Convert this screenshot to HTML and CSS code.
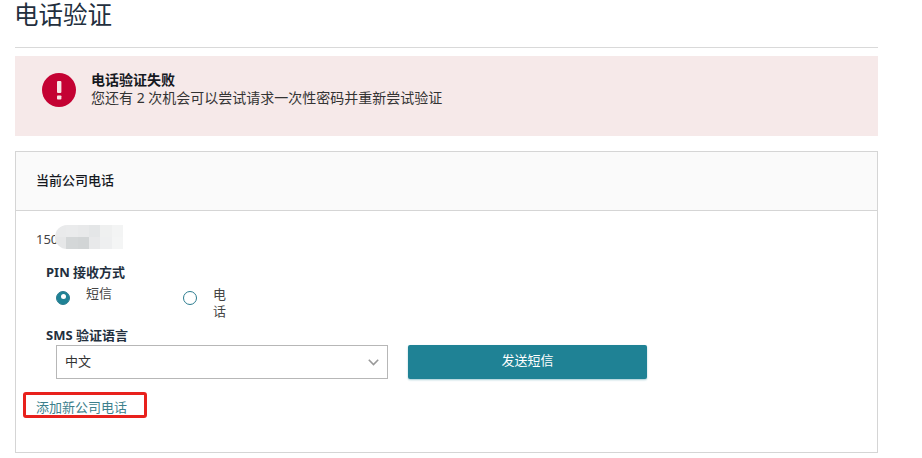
FILE: index.html
```html
<!DOCTYPE html>
<html lang="zh-CN">
<head>
    <meta charset="UTF-8">
    <title>电话验证</title>
    <link rel="stylesheet" href="styles.css">
</head>
<body>
    <div class="page">
        <h1 class="page-title">电话验证</h1>
        <div class="alert">
            <svg class="alert-icon" width="34" height="34" viewBox="0 0 34 34">
                <circle cx="17" cy="17" r="17" fill="#c40233"/>
                <rect x="15" y="8" width="4.4" height="12" rx="1" fill="#f7e6e6"/>
                <rect x="15" y="22.5" width="4.4" height="4" rx="0.8" fill="#f7e6e6"/>
            </svg>
            <div class="alert-text">
                <div class="alert-title">电话验证失败</div>
                <div>您还有 2 次机会可以尝试请求一次性密码并重新尝试验证</div>
            </div>
        </div>
        <div class="card">
            <div class="card-header">当前公司电话</div>
            <div class="card-body">
                <div class="phone">150
                    <span class="phone-blur">
                        <i></i><i></i><i></i><i></i><i></i><i></i>
                        <i></i><i></i><i></i><i></i><i></i><i></i>
                    </span>
                </div>
                <div class="field">
                    <div class="field-label">PIN 接收方式</div>
                    <div class="radio-row">
                        <label class="radio-item">
                            <span class="radio radio-on"></span>
                            <span class="radio-text">短信</span>
                        </label>
                        <label class="radio-item">
                            <span class="radio"></span>
                            <span class="radio-text radio-text-narrow">电话</span>
                        </label>
                    </div>
                </div>
                <div class="field field-sms">
                    <div class="field-label">SMS 验证语言</div>
                    <div class="send-row">
                        <div class="select">
                            <span class="select-value">中文</span>
                            <svg width="11" height="7" viewBox="0 0 11 7">
                                <path d="M0.8 0.8 L5.5 5.6 L10.2 0.8" fill="none" stroke="#999" stroke-width="1.6"/>
                            </svg>
                        </div>
                        <button class="send-btn" type="button">发送短信</button>
                    </div>
                </div>
                <div class="add-phone">
                    <a class="add-link">添加新公司电话</a>
                    <span class="red-box"></span>
                </div>
            </div>
        </div>
    </div>
</body>
</html>
```

FILE: styles.css
```css
body {
    margin: 0;
    background-color: #fff;
    color: #16191f;
    font-family: "Noto Sans", "Noto Sans CJK SC", sans-serif;
    font-size: 13px;
}
.page {
    width: 863px;
    margin-left: 15px;
}
.page-title {
    margin: 0;
    height: 45px;
    padding-top: 2px;
    border-bottom: 1px solid #d9d9d9;
    font-family: "Liberation Sans", "Noto Sans CJK SC", sans-serif;
    font-size: 24.5px;
    font-weight: 400;
    line-height: 28px;
    text-indent: -1px;
    color: #232f3e;
}
.alert {
    display: flex;
    height: 80px;
    margin-top: 8px;
    padding: 17px 0 0 27px;
    box-sizing: border-box;
    background-color: #f6e9e9;
}
.alert-text {
    margin: -2px 0 0 15px;
    font-size: 14px;
    line-height: 18px;
    color: #333;
}
.alert-title {
    font-weight: 700;
    color: #16191f;
}
.card {
    height: 302px;
    margin-top: 15px;
    border: 1px solid #d5d5d5;
    box-sizing: border-box;
}
.card-header {
    height: 59px;
    padding-left: 20px;
    line-height: 56px;
    box-sizing: border-box;
    border-bottom: 1px solid #d5d5d5;
    background-color: #fafafa;
    font-weight: 500;
}
.card-body {
    padding: 18px 20px 0;
}
.phone {
    position: relative;
    height: 20px;
    line-height: 20px;
    color: #444;
}
.phone-blur {
    position: absolute;
    left: 19px;
    top: -4px;
    display: grid;
    grid-template-columns: repeat(6, 1fr);
    grid-template-rows: 1fr 1fr;
    width: 68px;
    height: 24px;
    overflow: hidden;
    border-radius: 12px 0 0 12px;
    background-color: #fff;
}
.phone-blur i:nth-child(1) { background-color: #e9eaeb; }
.phone-blur i:nth-child(2) { background-color: #eaebec; }
.phone-blur i:nth-child(3) { background-color: #e8e9ea; }
.phone-blur i:nth-child(4) { background-color: #e4e6e7; }
.phone-blur i:nth-child(5) { background-color: #eff0f0; }
.phone-blur i:nth-child(6) { background-color: #f3f4f4; }
.phone-blur i:nth-child(7) { background-color: #e6e7e8; }
.phone-blur i:nth-child(8) { background-color: #d4d7d8; }
.phone-blur i:nth-child(9) { background-color: #d2d5d6; }
.phone-blur i:nth-child(10) { background-color: #e8e9ea; }
.phone-blur i:nth-child(11) { background-color: #eeeff0; }
.phone-blur i:nth-child(12) { background-color: #f4f5f5; }
.field {
    margin: 14px 0 0 10px;
}
.field-label {
    height: 18px;
    line-height: 18px;
    font-weight: 700;
    color: #232f3e;
}
.radio-row {
    display: flex;
    margin: 4px 0 0 10px;
    height: 38px;
}
.radio-item {
    display: flex;
    width: 127px;
}
.radio {
    width: 14px;
    height: 14px;
    margin-top: 6px;
    border: 1px solid #2b7c8f;
    border-radius: 50%;
    box-sizing: border-box;
}
.radio-on {
    position: relative;
    background-color: #1f8295;
}
.radio-on::after {
    content: "";
    position: absolute;
    left: 3.5px;
    top: 2px;
    width: 5px;
    height: 5px;
    border-radius: 50%;
    background-color: #fff;
}
.radio-text {
    margin: 0 0 0 16px;
    line-height: 17px;
    color: #444;
}
.radio-text-narrow {
    margin-top: 1px;
    width: 13px;
}
.field-sms {
    margin-top: 3px;
}
.send-row {
    display: flex;
    gap: 20px;
    margin: 1px 0 0 10px;
}
.select {
    display: flex;
    justify-content: space-between;
    align-items: center;
    width: 332px;
    height: 34px;
    padding: 0 8px;
    box-sizing: border-box;
    border: 1px solid #b7b7b7;
    color: #333;
}
.select-value {
    margin-bottom: 3px;
}
.send-btn {
    width: 239px;
    height: 34px;
    padding: 0 0 6px;
    border: none;
    border-radius: 2px;
    background-color: #1f8295;
    box-shadow: 0 1px 2px rgba(31, 130, 149, 0.4);
    color: #fff;
    font-family: inherit;
    font-size: 13px;
}
.add-phone {
    position: relative;
    margin-top: 19px;
    line-height: 18px;
}
.add-link {
    color: #3d7f8c;
}
.red-box {
    position: absolute;
    left: -13px;
    top: -6px;
    width: 124px;
    height: 26px;
    box-sizing: border-box;
    border: 3px solid #e8211c;
    border-radius: 3px;
}
```
